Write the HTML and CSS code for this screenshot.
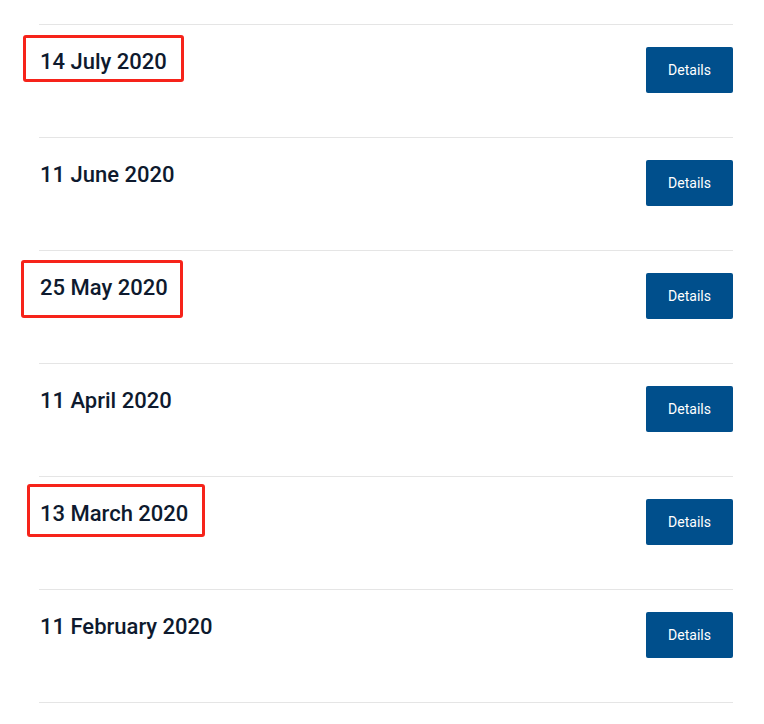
FILE: index.html
```html
<!DOCTYPE html>
<html lang="en">
<head>
    <meta charset="UTF-8">
    <meta name="viewport" content="width=device-width, initial-scale=1.0">
    <title>Releases</title>
    <link rel="stylesheet" href="styles.css">
</head>
<body>

    <div class="release-list">
        <!-- highlighted rows carry a red marker box -->
        <div class="release-row">
            <span class="marker marker-july"></span>
            <h3 class="release-date">14 July 2020</h3>
            <a href="#" class="details-btn">Details</a>
        </div>
        <div class="release-row">
            <h3 class="release-date">11 June 2020</h3>
            <a href="#" class="details-btn">Details</a>
        </div>
        <div class="release-row">
            <span class="marker marker-may"></span>
            <h3 class="release-date">25 May 2020</h3>
            <a href="#" class="details-btn">Details</a>
        </div>
        <div class="release-row">
            <h3 class="release-date">11 April 2020</h3>
            <a href="#" class="details-btn">Details</a>
        </div>
        <div class="release-row">
            <span class="marker marker-march"></span>
            <h3 class="release-date">13 March 2020</h3>
            <a href="#" class="details-btn">Details</a>
        </div>
        <div class="release-row">
            <h3 class="release-date">11 February 2020</h3>
            <a href="#" class="details-btn">Details</a>
        </div>
    </div>

</body>
</html>
```

FILE: styles.css
```css
body {
    font-family: Roboto, Arial, sans-serif;
    background-color: #ffffff;
    margin: 0;
}
.release-list {
    margin: 24px 0 0 39px;
    width: 694px;
    border-bottom: 1px solid #e5e5e5;
}
.release-row {
    position: relative;
    display: flex;
    justify-content: space-between;
    align-items: flex-start;
    border-top: 1px solid #e5e5e5;
    padding: 22px 0 44px 1px;
}
.release-date {
    margin: 2px 0 0;
    font-size: 22px;
    font-weight: 500;
    line-height: normal;
    color: #0e1a2e;
}
.details-btn {
    display: flex;
    align-items: center;
    justify-content: center;
    width: 87px;
    height: 46px;
    background: #004f8c;
    color: white;
    font-size: 14px;
    font-weight: 400;
    text-decoration: none;
    border-radius: 2px;
}
.marker {
    position: absolute;
    border: 3px solid #f6231a;
    border-radius: 3px;
    box-sizing: border-box;
}
.marker-july {
    left: -16px;
    top: 10px;
    width: 161px;
    height: 47px;
}
.marker-may {
    left: -18px;
    top: 9px;
    width: 162px;
    height: 58px;
}
.marker-march {
    left: -12px;
    top: 7px;
    width: 178px;
    height: 53px;
}
```
